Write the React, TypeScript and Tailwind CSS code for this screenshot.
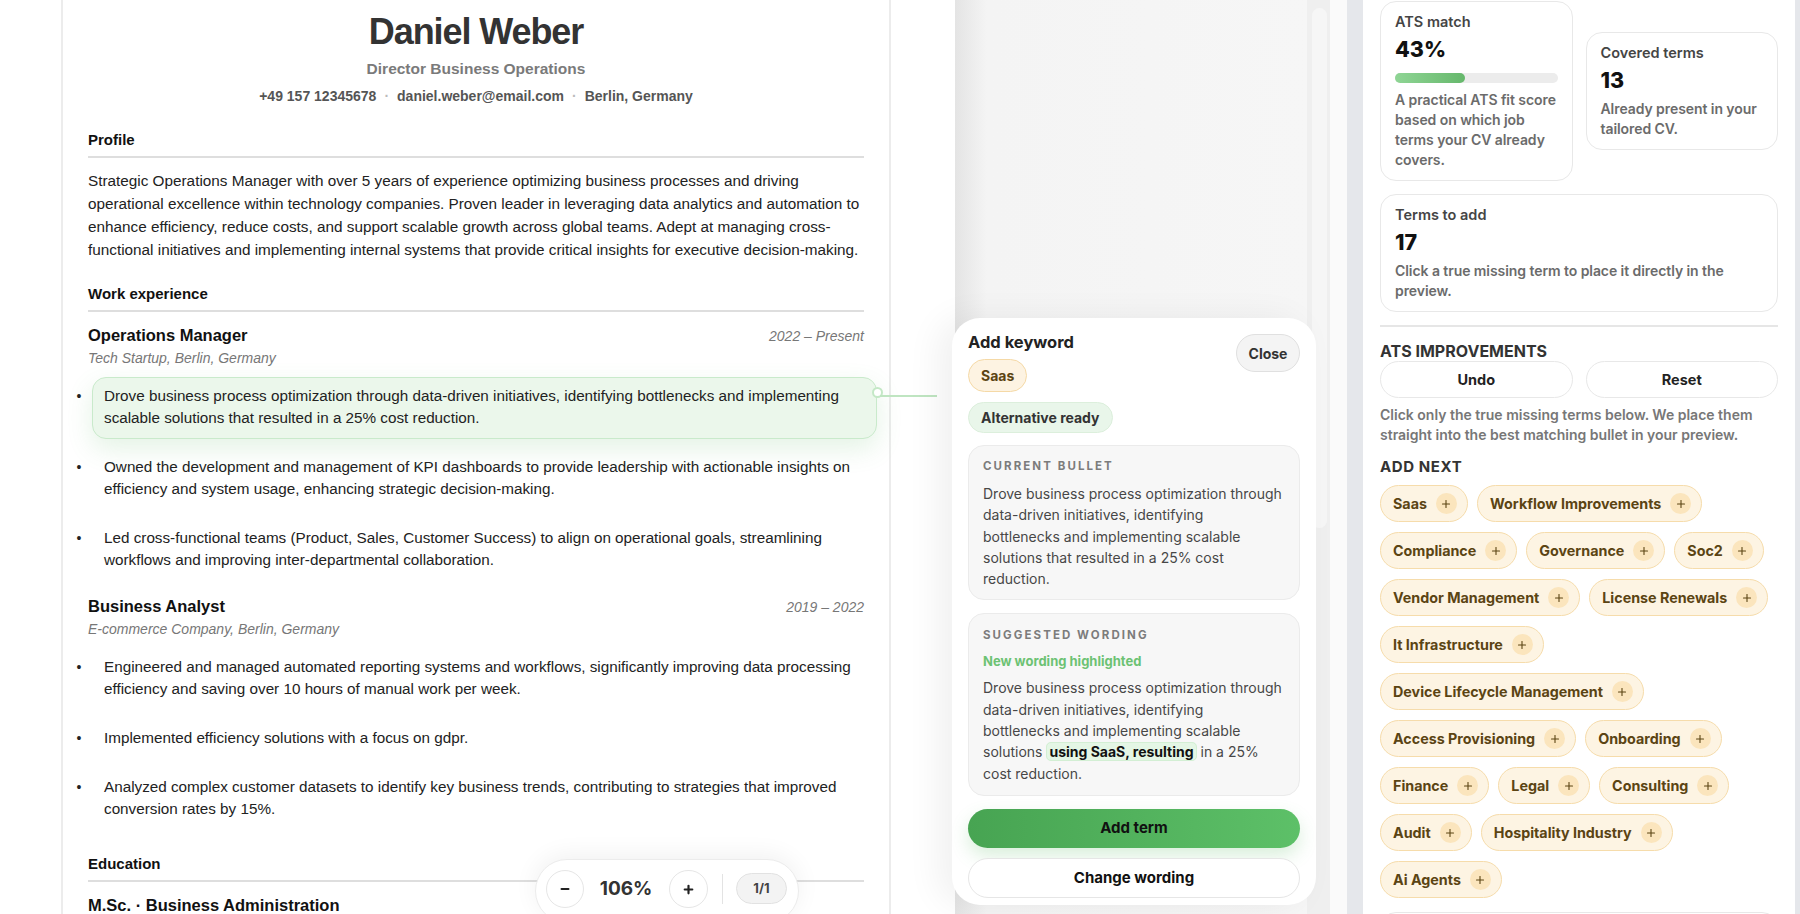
import { Minus, Plus } from 'lucide-react'

const experience = [
  {
    title: 'Operations Manager',
    dates: '2022 – Present',
    company: 'Tech Startup, Berlin, Germany',
    bullets: [
      'Drove business process optimization through data-driven initiatives, identifying bottlenecks and implementing scalable solutions that resulted in a 25% cost reduction.',
      'Owned the development and management of KPI dashboards to provide leadership with actionable insights on efficiency and system usage, enhancing strategic decision-making.',
      'Led cross-functional teams (Product, Sales, Customer Success) to align on operational goals, streamlining workflows and improving inter-departmental collaboration.',
    ],
    active: 0,
  },
  {
    title: 'Business Analyst',
    dates: '2019 – 2022',
    company: 'E-commerce Company, Berlin, Germany',
    bullets: [
      'Engineered and managed automated reporting systems and workflows, significantly improving data processing efficiency and saving over 10 hours of manual work per week.',
      'Implemented efficiency solutions with a focus on gdpr.',
      'Analyzed complex customer datasets to identify key business trends, contributing to strategies that improved conversion rates by 15%.',
    ],
    active: -1,
  },
]

const missingTerms = [
  'Saas',
  'Workflow Improvements',
  'Compliance',
  'Governance',
  'Soc2',
  'Vendor Management',
  'License Renewals',
  'It Infrastructure',
  'Device Lifecycle Management',
  'Access Provisioning',
  'Onboarding',
  'Finance',
  'Legal',
  'Consulting',
  'Audit',
  'Hospitality Industry',
  'Ai Agents',
]

const SectionTitle = ({ children }: { children: string }) => (
  <h2 className="border-b-2 border-[#dedede] pb-[6px] text-[15px] font-bold leading-[20px] text-[#111]">{children}</h2>
)

const CvPaper = () => (
  <div className="ml-[61px] h-full w-[830px] border-x-2 border-[#ececec] pl-[25px] pr-[25px] pt-[10px] font-['Liberation_Sans',Arial,sans-serif] text-[#222]">
    <div className="text-center">
      <h1 className="text-[36px] font-bold leading-[44px] tracking-[-0.03em] text-[#333]">Daniel Weber</h1>
      <p className="mt-[5px] text-[15.5px] font-bold leading-[20px] text-[#7a7a7a]">Director Business Operations</p>
      <p className="mt-[7px] text-[14px] font-bold leading-[20px] text-[#555]">
        +49 157 12345678<span className="mx-[8px] text-[#bbb]">·</span>daniel.weber@email.com
        <span className="mx-[8px] text-[#bbb]">·</span>Berlin, Germany
      </p>
    </div>

    <section className="mt-[24px]">
      <SectionTitle>Profile</SectionTitle>
      <p className="mt-[11px] text-[15.3px] leading-[23px]">
        Strategic Operations Manager with over 5 years of experience optimizing business processes and driving
        operational excellence within technology companies. Proven leader in leveraging data analytics and automation to
        enhance efficiency, reduce costs, and support scalable growth across global teams. Adept at managing
        cross-functional initiatives and implementing internal systems that provide critical insights for executive
        decision-making.
      </p>
    </section>

    <section className="mt-[23px]">
      <SectionTitle>Work experience</SectionTitle>
      {experience.map((job, i) => (
        <div key={job.title} className={i === 0 ? 'mt-[12px]' : 'mt-[14px]'}>
          <div className="flex items-baseline justify-between">
            <h3 className="text-[16.5px] font-bold leading-[22px] text-[#111]">{job.title}</h3>
            <span className="text-[14px] italic text-[#777]">{job.dates}</span>
          </div>
          <p className="mt-[1px] text-[14px] italic leading-[20px] text-[#777]">{job.company}</p>
          <ul className="ml-[-17px] mr-[-13px] mt-[9px] flex flex-col gap-[9px]">
            {job.bullets.map((b, j) => (
              <li key={j} className="flex items-start">
                <span className="mt-[8px] w-[16px] shrink-0 text-center text-[14px] leading-[22px]">•</span>
                <div
                  className={
                    j === job.active
                      ? 'relative ml-[5px] flex-1 rounded-[14px] border border-[#c9eacb] bg-[#ebf7eb] px-[11px] pb-[9px] pt-[7px] shadow-[0_10px_26px_rgba(90,180,95,0.16)]'
                      : 'ml-[5px] flex-1 border border-transparent px-[11px] pb-[9px] pt-[7px]'
                  }
                >
                  <p className="text-[15.25px] leading-[22px]">{b}</p>
                  {j === job.active && (
                    <>
                      <span className="absolute right-[-7px] top-[9px] h-[11px] w-[11px] rounded-full border-2 border-[#c4e8c6] bg-white" />
                      <span className="absolute left-[calc(100%+4px)] top-[17px] h-[2px] w-[57px] bg-[#bfe5c1]" />
                    </>
                  )}
                </div>
              </li>
            ))}
          </ul>
        </div>
      ))}
    </section>

    <section className="mt-[24px]">
      <SectionTitle>Education</SectionTitle>
      <h3 className="mt-[12px] text-[16.5px] font-bold leading-[22px] text-[#111]">M.Sc. · Business Administration</h3>
    </section>
  </div>
)

const ZoomControl = () => (
  <div className="absolute left-[535px] top-[859px] flex h-[64px] items-start rounded-full border border-[#ececec] bg-white pl-[10px] pr-[11px] pt-[10px] font-['Inter',sans-serif] shadow-[0_-4px_24px_rgba(0,0,0,0.06)]">
    <button className="flex h-[38px] w-[38px] items-center justify-center rounded-full border border-[#e6e6e6] bg-white text-[#222]">
      <Minus size={12} strokeWidth={4} />
    </button>
    <span className="ml-[18px] flex h-[38px] w-[48px] items-center justify-center text-[19px] font-bold text-[#333]">106%</span>
    <button className="ml-[19px] flex h-[38px] w-[39px] items-center justify-center rounded-full border border-[#e6e6e6] bg-white text-[#222]">
      <Plus size={13} strokeWidth={4} />
    </button>
    <span className="ml-[14px] mt-[4px] h-[30px] w-px bg-[#e3e3e3]" />
    <span className="ml-[13px] mt-[3px] flex h-[31px] w-[51px] items-center justify-center rounded-full border border-[#e2e2e2] bg-[#f3f3f3] text-[13px] font-bold text-[#444]">
      1/1
    </span>
  </div>
)

const KeywordPanel = () => (
  <div className="absolute bottom-[9px] left-[-3px] top-[318px] flex w-[364px] flex-col rounded-[28px] bg-white px-[16px] pt-[13px] font-['Inter',sans-serif] shadow-[-14px_0_34px_rgba(0,0,0,0.06)]">
    <div className="flex items-start justify-between">
      <div>
        <h3 className="text-[16.5px] font-bold leading-[22px] text-[#222]">Add keyword</h3>
        <span className="mt-[6px] inline-flex h-[33px] items-center rounded-full border border-[#f5d9a6] bg-[#fdf3e2] px-[12px] text-[14px] font-bold text-[#5b4413]">
          Saas
        </span>
      </div>
      <button className="mt-[3px] h-[38px] w-[64px] rounded-full border border-[#e0e0e0] bg-[#f4f4f4] text-[14px] font-bold text-[#333]">
        Close
      </button>
    </div>
    <span className="mt-[10px] inline-flex h-[31px] w-fit items-center rounded-full border border-[#dcefdc] bg-[#e9f6ea] px-[12px] text-[14px] font-bold text-[#333]">
      Alternative ready
    </span>

    <div className="mt-[12px] rounded-[16px] border border-[#ebebeb] bg-[#f7f7f7] pb-[10px] pl-[14px] pr-[16px] pt-[13px]">
      <p className="text-[11.5px] font-bold uppercase leading-[14px] tracking-[0.18em] text-[#7c7c7c]">Current bullet</p>
      <p className="mt-[10px] text-[14px] leading-[21.3px] text-[#474747]">
        Drove business process optimization through data-driven initiatives, identifying bottlenecks and implementing
        scalable solutions that resulted in a 25% cost reduction.
      </p>
    </div>

    <div className="mt-[13px] rounded-[16px] border border-[#ebebeb] bg-[#f7f7f7] pb-[11px] pl-[14px] pr-[16px] pt-[14px]">
      <p className="text-[11.5px] font-bold uppercase leading-[14px] tracking-[0.18em] text-[#7c7c7c]">Suggested wording</p>
      <p className="mt-[10px] text-[13px] font-bold leading-[18px] text-[#6cc273]">New wording highlighted</p>
      <p className="mt-[7px] text-[14px] leading-[21.3px] text-[#474747]">
        Drove business process optimization through data-driven initiatives, identifying bottlenecks and implementing
        scalable solutions{' '}
        <mark className="whitespace-nowrap rounded-[5px] border border-[#d3efd4] bg-[#e4f6e5] px-[2px] font-bold text-[#111]">
          using SaaS, resulting
        </mark>{' '}
        in a 25% cost reduction.
      </p>
    </div>

    <button className="mt-[13px] h-[39px] shrink-0 rounded-full bg-linear-to-r from-[#47a452] to-[#5dc068] text-[15px] font-bold text-[#111] shadow-[0_8px_18px_rgba(80,180,90,0.22)]">
      Add term
    </button>
    <button className="mt-[10px] h-[40px] shrink-0 rounded-full border border-[#e6e6e6] bg-white text-[15px] font-bold text-[#111]">
      Change wording
    </button>
  </div>
)

const StatCard = ({ label, value, text, bar }: { label: string; value: string; text: string; bar?: number }) => (
  <div className="rounded-[16px] border border-[#e8e8e8] bg-white pb-[10px] pl-[14px] pr-[11px] pt-[11px]">
    <p className="text-[14.5px] font-semibold leading-[18px] text-[#454545]">{label}</p>
    <p className="mt-[4px] text-[21.5px] font-extrabold leading-[28px] text-[#111]">{value}</p>
    {bar !== undefined && (
      <div className="mr-[3px] mt-[10px] h-[10px] rounded-full bg-[#ececec]">
        <div className="h-full rounded-full bg-linear-to-r from-[#8fd595] to-[#66b86c]" style={{ width: `${bar}%` }} />
      </div>
    )}
    <p className={`${bar !== undefined ? 'mt-[7px]' : 'mt-[5px]'} text-[14px] font-semibold leading-[20px] tracking-[-0.005em] text-[#6b6b6b]`}>
      {text}
    </p>
  </div>
)

const AtsPanel = () => (
  <div className="w-[432px] shrink-0 bg-white px-[17px] pt-[1px] font-['Inter',sans-serif]">
    <div className="grid grid-cols-2 items-center gap-[13px]">
      <StatCard
        label="ATS match"
        value="43%"
        bar={43}
        text="A practical ATS fit score based on which job terms your CV already covers."
      />
      <StatCard label="Covered terms" value="13" text="Already present in your tailored CV." />
      <div className="col-span-2">
        <StatCard label="Terms to add" value="17" text="Click a true missing term to place it directly in the preview." />
      </div>
    </div>

    <div className="mt-[13px] h-[2px] bg-[#e6e6e6]" />
    <h3 className="mt-[14px] text-[16px] font-bold uppercase leading-[20px] text-[#333]">ATS improvements</h3>
    <div className="grid grid-cols-2 gap-[13px]">
      <button className="h-[37px] rounded-full border border-[#e8e8e8] bg-white text-[14.5px] font-bold text-[#222]">Undo</button>
      <button className="h-[37px] rounded-full border border-[#e8e8e8] bg-white text-[14.5px] font-bold text-[#222]">Reset</button>
    </div>
    <p className="mt-[7px] text-[14px] font-semibold leading-[20px] text-[#777]">
      Click only the true missing terms below. We place them straight into the best matching bullet in your preview.
    </p>

    <h3 className="mt-[12px] text-[15px] font-bold uppercase leading-[20px] tracking-[0.04em] text-[#333]">Add next</h3>
    <div className="mt-[8px] flex flex-wrap gap-x-[9px] gap-y-[10px]">
      {missingTerms.map((term) => (
        <button
          key={term}
          className="flex h-[37px] items-center gap-[9px] rounded-full border border-[#f6dcab] bg-[#fdf4e3] pl-[12px] pr-[10px] text-[14.3px] font-bold text-[#5b4413]"
        >
          {term}
          <span className="flex h-[21px] w-[21px] items-center justify-center rounded-full bg-[#fbe5bd]">
            <Plus size={12} strokeWidth={2.2} />
          </span>
        </button>
      ))}
    </div>
    <div className="mt-[14px] h-[40px] rounded-[16px] border border-[#e8e8e8]" />
  </div>
)

export default function App() {
  return (
    <div className="flex h-[914px] w-[1800px] overflow-hidden bg-white">
      <div className="relative w-[955px] shrink-0">
        <CvPaper />
        <ZoomControl />
      </div>

      <div className="relative flex w-[375px] shrink-0">
        <div className="w-[352px] bg-linear-to-r from-[#e4e4e4] via-[#f4f4f4] via-[9%] to-[#f6f6f6]" />
        <div className="w-[23px] bg-[#efefef] pl-[5px] pt-[8px]">
          <div className="h-[520px] w-[15px] rounded-full bg-[#f6f6f6]" />
        </div>
        <KeywordPanel />
      </div>

      <div className="w-[17px] shrink-0 bg-[#fafafa]" />
      <div className="w-[16px] shrink-0 bg-[#e5e7eb]" />
      <AtsPanel />
      <div className="w-[5px] shrink-0 bg-[#e5e7eb]" />
    </div>
  )
}
